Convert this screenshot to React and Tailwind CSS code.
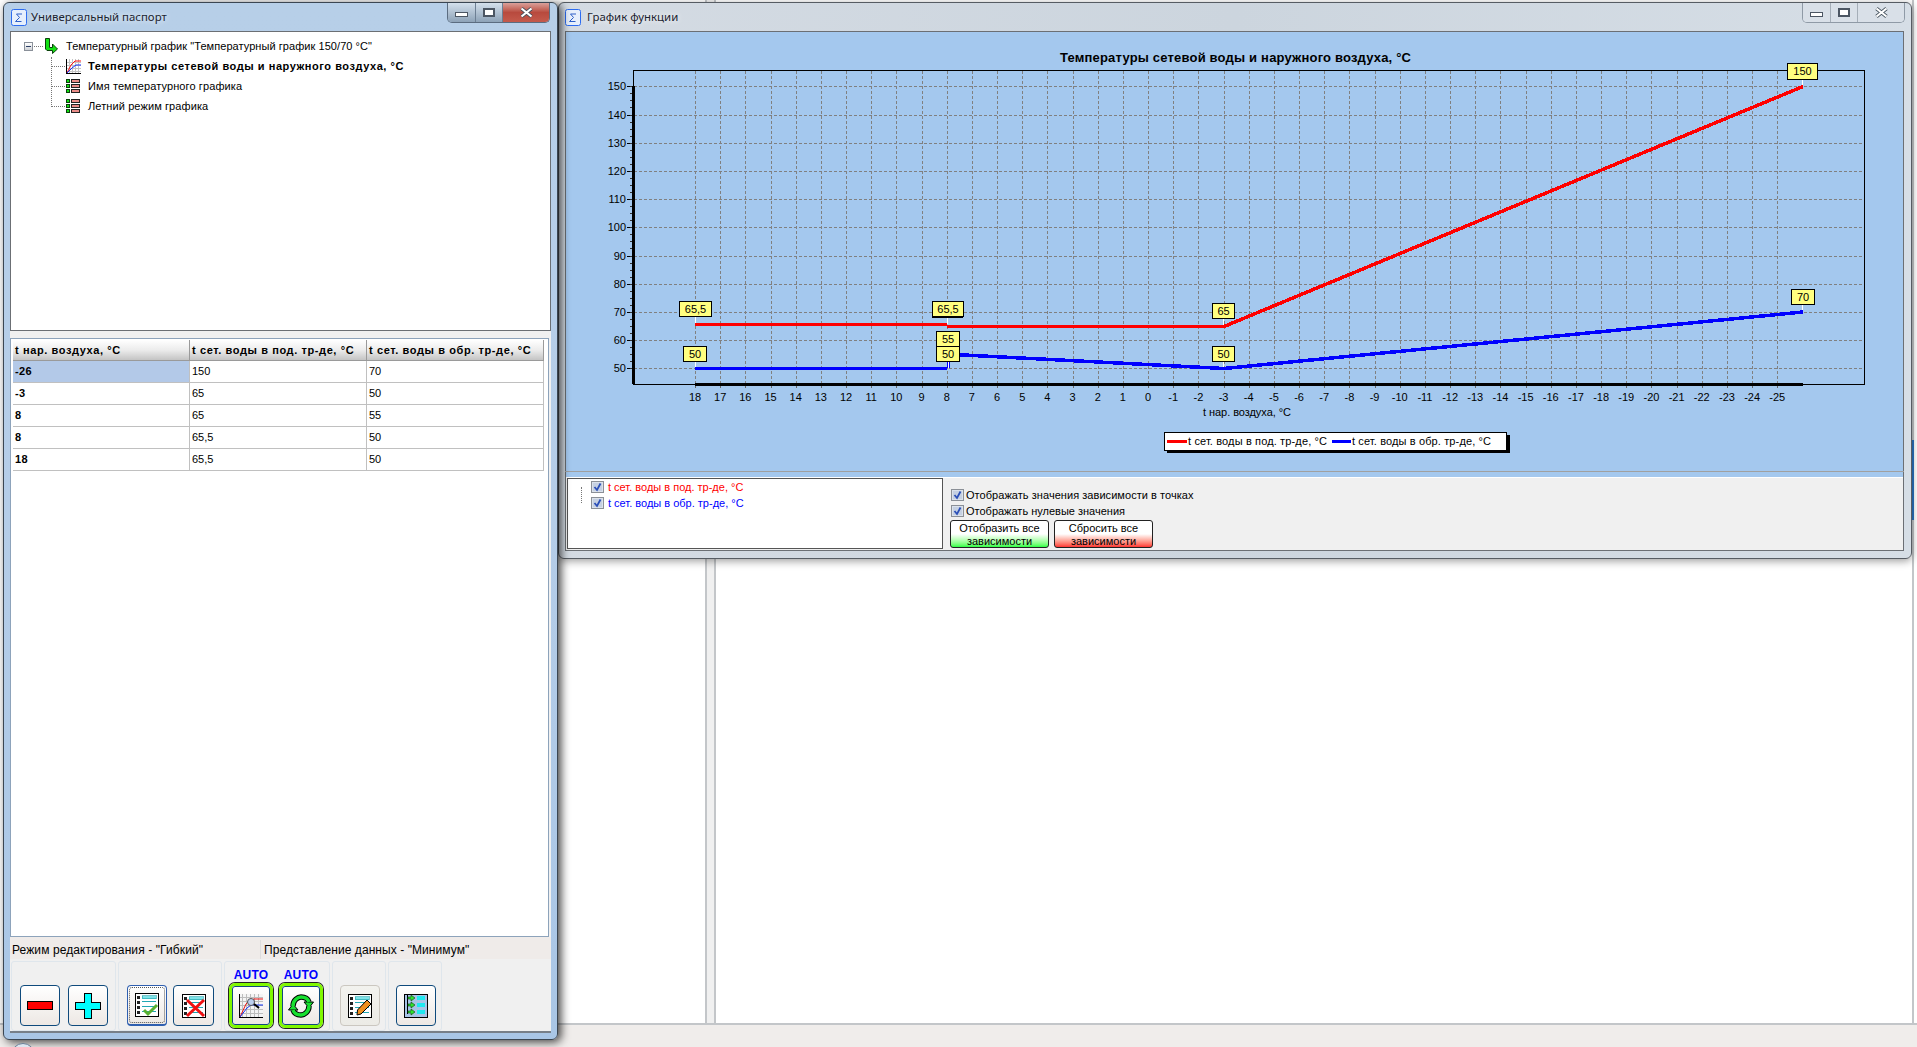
import React from "react";

const Sigma = () => (
  <svg width="16" height="17" viewBox="0 0 16 17" className="shrink-0">
    <rect x="0.5" y="0.5" width="15" height="16" rx="2" fill="#e6effc" stroke="#2d6cf0" />
    <path d="M11 5 H5.5 L8.5 8.5 L4.5 12.5 H10.5" fill="none" stroke="#2d5fc8" strokeWidth="1" />
  </svg>
);

const WinButtons = ({ active }) => (
  <div className={`ml-auto flex h-[20px] items-stretch rounded-b-[5px] border border-t-0 overflow-hidden ${active ? "border-[#5b6c80]" : "border-[#8f9aa6]"}`}>
    <div className={`w-[28px] flex items-center justify-center border-r ${active ? "border-[#6d7f93] bg-gradient-to-b from-[#d4e0ec] to-[#8ea3b8]" : "border-[#a5aeb8] bg-[#d9e0e8]"}`}>
      <div className="mt-[3px] h-[5px] w-[13px] border border-[#4c5663] bg-white" />
    </div>
    <div className={`w-[27px] flex items-center justify-center border-r ${active ? "border-[#6d7f93] bg-gradient-to-b from-[#d4e0ec] to-[#8ea3b8]" : "border-[#a5aeb8] bg-[#d9e0e8]"}`}>
      <div className="h-[9px] w-[12px] border-2 border-[#4c5663] bg-white" />
    </div>
    <div className={`w-[46px] flex items-center justify-center ${active ? "bg-gradient-to-b from-[#d9a09a] via-[#b84a3e] to-[#c45a4c]" : "bg-[#d9e0e8]"}`}>
      <svg width="13" height="11" viewBox="0 0 13 11">
        <path d="M1.5 1.5 L11.5 9.5 M11.5 1.5 L1.5 9.5" stroke="#44505c" strokeWidth="3.6" />
        <path d="M1.5 1.5 L11.5 9.5 M11.5 1.5 L1.5 9.5" stroke="#fff" strokeWidth="2.2" />
      </svg>
    </div>
  </div>
);

const TitleBar = ({ title, active, gap }) => (
  <div className="flex h-[28px] shrink-0 items-start">
    <div className="mt-[6px]"><Sigma /></div>
    <span className={`mt-[5px] ${gap} font-['Noto_Sans',sans-serif] text-[11.4px] leading-[18px] text-[#1c2430] [text-shadow:0_0_6px_#fff]`}>{title}</span>
    <WinButtons active={active} />
  </div>
);

const ArrowIcon = () => (
  <svg width="14" height="16" viewBox="0 0 14 16" className="shrink-0">
    <path d="M1.5 0.5 H5.5 V9.5 H8.5 V6 L13.5 11 L8.5 15.5 V12.5 H3 L1.5 11 Z" fill="#12e012" stroke="#0a400a" />
  </svg>
);

const GraphIcon = () => (
  <svg width="15" height="15" viewBox="0 0 15 15" className="shrink-0" shapeRendering="crispEdges">
    <rect width="15" height="15" fill="#fff" />
    <path d="M3 0V14M6 0V14M9 0V14M12 0V14M1 3H15M1 6H15M1 9H15M1 12H15" stroke="#c4c4c4" />
    <path d="M0.5 0V14.5H15" stroke="#000" fill="none" />
    <path d="M1 14 L5 6 L9 2 H15" stroke="#ff1010" fill="none" shapeRendering="auto" />
    <path d="M1 14 L6 9 L10 6 H15" stroke="#1030ff" fill="none" shapeRendering="auto" />
  </svg>
);

const ListIcon = () => (
  <svg width="14" height="15" viewBox="0 0 14 15" className="shrink-0" shapeRendering="crispEdges">
    {[0, 5, 10].map((y) => (
      <g key={y}>
        <rect x="0.5" y={y + 0.5} width="3" height="3" fill="#14e014" stroke="#0a400a" />
        <rect x="5.5" y={y + 0.5} width="8" height="3" fill="#e88c88" stroke="#222" />
      </g>
    ))}
  </svg>
);

const TreeRow = ({ icon, children, bold }) => (
  <div className="flex h-[20px] items-center">
    <div className="ml-[40px] mr-[1px] w-[14px] border-b border-dotted border-[#777]" />
    <div className="flex w-[22px] items-center">{icon}</div>
    <span className={`whitespace-nowrap text-[11px] text-black ${bold ? "font-bold tracking-[0.55px]" : "tracking-[0.1px]"}`}>{children}</span>
  </div>
);

const rows = [
  ["-26", "150", "70"],
  ["-3", "65", "50"],
  ["8", "65", "55"],
  ["8", "65,5", "50"],
  ["18", "65,5", "50"],
];

const heads = ["t нар. воздуха, °C", "t сет. воды в под. тр-де, °C", "t сет. воды в обр. тр-де, °C"];

const Doc = ({ children, bg = "#fff", bullets = true, lines = true }) => (
  <svg width="24" height="24" viewBox="0 0 24 24" shapeRendering="crispEdges">
    <rect x="0.5" y="0.5" width="23" height="23" fill={bg} stroke="#000" />
    {bullets && [4, 9, 14, 19].map((y) => <rect key={y} x="2" y={y - 1} width="3" height="3" fill="#222" />)}
    {lines && (
      <>
        <rect x="7" y="2.5" width="14" height="3" fill="#7fe3e8" stroke="#1aa0a8" strokeWidth="0.6" />
        <path d="M7 8.5H21M7 13.5H21M7 18.5H21" stroke="#22a8b4" />
      </>
    )}
    {children}
  </svg>
);

const ToolBtn = ({ children, focus, disabled, w = "w-[40px]" }) => (
  <div className={`relative flex ${w} h-[41px] items-center justify-center rounded-[4px] border bg-gradient-to-b ${disabled ? "border-[#cbc7c0] from-[#f2f2ee] to-[#ecebe6]" : focus ? "border-[#2f5fb0] border-b-2 from-white to-[#ede8e4]" : "border-[#0f4a7c] from-white to-[#ede8e4]"}`}>
    {focus && <div className="absolute inset-[1px] rounded-[3px] border border-dotted border-[#555]" />}
    {children}
  </div>
);

const Band = ({ w, children, px }) => (
  <div className={`flex h-[70px] ${w} ${px} items-end rounded-[3px] border border-[#dfe6ec] bg-[#f0f0f0] pb-[4px]`}>{children}</div>
);

const AutoBtn = ({ children }) => (
  <div className="flex w-[46px] flex-col items-center">
    <span className="mb-[2px] text-[12px] font-bold leading-[12px] tracking-[0.2px] text-[#0000ff]">AUTO</span>
    <div className="-mb-[2px] rounded-[6px] border-[3px] border-[#80f800] shadow-[0_0_0_1px_#222]">
      <div className="flex h-[39px] w-[38px] items-center justify-center rounded-[3px] border border-[#0f4a7c] bg-gradient-to-b from-white to-[#ede8e4]">
        {children}
      </div>
    </div>
  </div>
);

const Check = () => (
  <svg width="13" height="12" viewBox="0 0 13 12" className="shrink-0">
    <rect x="0.5" y="0.5" width="12" height="11" fill="#dbe2ec" stroke="#8b9097" />
    <rect x="2" y="2" width="9" height="8" fill="#c5d0e2" />
    <path d="M3.5 6 L6 9 L9.5 2.5" fill="none" stroke="#2b4fb8" strokeWidth="1.8" />
  </svg>
);

// chart geometry
const X = (i) => 695 + 25.17 * i;
const Y = (v) => 369.3 - (v - 50) * 2.82;
const xLabels = Array.from({ length: 44 }, (_, i) => 18 - i);
const yLabels = [150, 140, 130, 120, 110, 100, 90, 80, 70, 60, 50];

const Tag = ({ x1, x2, y1, y2, t }) => (
  <g>
    <rect x={x1 + 0.5} y={y1 + 0.5} width={x2 - x1} height={y2 - y1} fill="#ffff80" stroke="#000" shapeRendering="crispEdges" />
    <text x={(x1 + x2) / 2 + 0.5} y={y1 + 12} textAnchor="middle" fontSize="11" fill="#000">{t}</text>
  </g>
);

const Chart = () => (
  <svg viewBox="565 33 1339 439" className="block h-[439px] w-[1339px] font-['Liberation_Sans',sans-serif]">
    <text x="1235.5" y="63" textAnchor="middle" fontSize="13" fontWeight="700" textLength="351" fill="#000">Температуры сетевой воды и наружного воздуха, °C</text>
    <g shapeRendering="crispEdges">
      <rect x="633.5" y="71.5" width="1231" height="314" fill="none" stroke="#000" />
      {yLabels.map((v) => (
        <path key={v} d={`M634 ${Math.round(Y(v)) + 0.5} H1864`} stroke="#808080" strokeDasharray="3 2" />
      ))}
      {xLabels.map((v, i) => (
        <path key={v} d={`M${Math.round(X(i)) + 0.5} 72 V385`} stroke="#808080" strokeDasharray="3 2" />
      ))}
      {yLabels.map((v) => (
        <path key={v} d={`M627 ${Math.round(Y(v)) + 0.5} H633`} stroke="#000" />
      ))}
      {Array.from({ length: 41 }, (_, i) => (
        <path key={i} d={`M630 ${Math.round(Y(50 + i * 2.5)) + 0.5} H633`} stroke="#333" />
      ))}
      <rect x="632" y={Y(150)} width="3" height={385 - Y(150)} fill="#000" />
      <rect x="695" y="384" width="1108" height="3" fill="#000" />
      {xLabels.map((v, i) => (
        <path key={v} d={`M${Math.round(X(i)) + 0.5} 387 V389`} stroke="#666" />
      ))}
      {/* white leaders */}
      <path d="M695.5 317V325M947.5 317V325M1223.5 319V327M1223.5 362V369M695.5 362V369M1802.5 80V87M1802.5 305V313" stroke="#fff" />
      {/* red series */}
      <path d="M695 325.5 H947" stroke="#ff0000" strokeWidth="3" />
      <path d="M947 327.5 H1224" stroke="#ff0000" strokeWidth="3" />
      <path d="M695 369.5 H947" stroke="#0000ff" strokeWidth="3" />
      <path d="M948 356 V369" stroke="#0000ff" strokeWidth="3" />
      <path d="M948.5 356V369" stroke="#fff" />
    </g>
    <path d="M1224 327.5 L1803 87.5" stroke="#ff0000" strokeWidth="3.5" fill="none" shapeRendering="crispEdges" />
    <path d="M948 355.2 L1224 369.5 L1803 313" stroke="#0000ff" strokeWidth="3.5" fill="none" shapeRendering="crispEdges" />
    <g fontSize="11" fill="#000">
      {yLabels.map((v) => (
        <text key={v} x="626" y={Y(v) + 4} textAnchor="end">{v}</text>
      ))}
      {xLabels.map((v, i) => (
        <text key={v} x={X(i)} y="402" textAnchor="middle">{v}</text>
      ))}
      <text x="1203" y="417" textLength="88">t нар. воздуха, °C</text>
    </g>
    <rect x="932" y="303" width="31" height="16" fill="#000" shapeRendering="crispEdges" />
    <Tag x1={679} x2={711} y1={302} y2={317} t="65,5" />
    <Tag x1={932} x2={963} y1={302} y2={317} t="65,5" />
    <Tag x1={1212} x2={1234} y1={304} y2={319} t="65" />
    <Tag x1={936} x2={959} y1={332} y2={347} t="55" />
    <Tag x1={683} x2={706} y1={347} y2={362} t="50" />
    <Tag x1={936} x2={959} y1={347} y2={362} t="50" />
    <Tag x1={1212} x2={1234} y1={347} y2={362} t="50" />
    <Tag x1={1787} x2={1817} y1={64} y2={80} t="150" />
    <Tag x1={1791} x2={1814} y1={290} y2={305} t="70" />
    {/* legend */}
    <g shapeRendering="crispEdges">
      <rect x="1167" y="436" width="343" height="18" fill="#000" />
      <rect x="1164.5" y="433.5" width="342" height="17.5" fill="#fff" stroke="#000" />
      <path d="M1167 442 H1187" stroke="#ff0000" strokeWidth="3" />
      <path d="M1332 442 H1351" stroke="#0000ff" strokeWidth="3" />
    </g>
    <g fontSize="11" fill="#000">
      <text x="1188" y="446" textLength="139">t сет. воды в под. тр-де, °C</text>
      <text x="1352" y="446" textLength="139">t сет. воды в обр. тр-де, °C</text>
    </g>
  </svg>
);

const BigBtn = ({ top, bottom, tone }) => (
  <div className={`flex h-[28px] w-[99px] flex-col items-center rounded-[3px] border border-[#222] bg-gradient-to-b ${tone} pt-[1px] text-[11px] leading-[13px] text-black`}>
    <span>{top}</span>
    <span>{bottom}</span>
  </div>
);

export default function App() {
  return (
    <div className="relative flex h-[1047px] w-[1917px] flex-col overflow-hidden bg-white font-['Liberation_Sans',sans-serif]">
      {/* desktop application behind the windows */}
      <div className="flex h-[1025px] shrink-0 border-b-2 border-[#c3c6c9]">
        <div className="w-[707px] border-r-2 border-[#c3c6c9] bg-white" />
        <div className="w-[7px] bg-[#f0f0f0]" />
        <div className="w-[1200px] border-l-2 border-r-2 border-[#c3c6c9] bg-white" />
      </div>
      <div className="flex-1 bg-[#f0edeb]" />

      {/* universal passport window */}
      <div className="absolute left-[3px] top-[2px] z-20 flex h-[1038px] w-[555px] flex-col rounded-t-[6px] rounded-b-[6px] border border-[#3b4652] bg-gradient-to-b from-[#b7cfe8] via-[#b5cde8] to-[#a9c6e6] px-[6px] pb-[5px] shadow-[3px_2px_10px_rgba(0,0,0,0.75)]">
        <div className="-ml-[6px] -mr-[6px] px-[7px]">
          <TitleBar title="Универсальный паспорт" active gap="ml-[4px]" />
        </div>
        <div className="relative h-[300px] shrink-0 border border-[#6b6f74] bg-white pt-[4px]">
          <div className="flex h-[20px] items-center pl-[13px]">
            <div className="flex h-[9px] w-[9px] items-center justify-center border border-[#8a9099] bg-gradient-to-b from-white to-[#cfd2d6]">
              <div className="h-[1px] w-[5px] bg-[#2c3e66]" />
            </div>
            <div className="mx-[1px] w-[9px] border-b border-dotted border-[#777]" />
            <ArrowIcon />
            <span className="ml-[8px] whitespace-nowrap text-[11px] tracking-[0.06px] text-black">Температурный график "Температурный график 150/70 °C"</span>
          </div>
          <div className="absolute left-[40px] top-[25px] h-[50px] border-l border-dotted border-[#777]" />
          <TreeRow icon={<GraphIcon />} bold>Температуры сетевой воды и наружного воздуха, °C</TreeRow>
          <TreeRow icon={<ListIcon />}>Имя температурного графика</TreeRow>
          <TreeRow icon={<ListIcon />}>Летний режим графика</TreeRow>
        </div>
        <div className="h-[7px] shrink-0 bg-[#f0f0f0]" />
        <div className="h-[599px] shrink-0 bg-[#f0f0f0] pr-[2px]">
          <div className="h-[599px] border border-[#8da3bb] bg-white pl-[2px] pt-[1px]">
            <div className="grid w-[531px] grid-cols-[177px_177px_177px]">
              {heads.map((h) => (
                <div key={h} className="flex h-[21px] items-center border-r border-b border-[#9a9a9a] bg-gradient-to-b from-white via-[#ececec] to-[#c4c4c4] pl-[2px] text-[11px] font-bold tracking-[0.6px] text-black">{h}</div>
              ))}
              {rows.map((r, i) =>
                r.map((c, j) => (
                  <div key={j} className={`flex h-[22px] items-center border-r border-b border-[#c0c0c0] pl-[2px] text-[11px] text-black ${j === 0 ? "font-bold tracking-[0.4px]" : ""} ${i === 0 && j === 0 ? "bg-[#b3c9e8]" : "bg-white"}`}>{c}</div>
                ))
              )}
            </div>
          </div>
        </div>
        <div className="flex h-[22px] shrink-0 items-center bg-[#efebe9] pt-[3px] text-[12px] text-black">
          <div className="w-[250px] pl-[2px] tracking-[0.1px]">Режим редактирования - "Гибкий"</div>
          <div className="h-[19px] border-l border-[#ddd]" />
          <div className="pl-[3px] tracking-[0.07px]">Представление данных - "Минимум"</div>
        </div>
        <div className="flex h-[74px] shrink-0 gap-[2px] border-b-2 border-[#777f88] bg-[#f0f0f0] pl-[1px] pt-[2px]">
          <Band w="w-[105px]" px="pl-[8px] gap-[8px]">
            <ToolBtn>
              <svg width="26" height="9" viewBox="0 0 26 9" shapeRendering="crispEdges"><rect x="0.5" y="0.5" width="25" height="8" fill="#ff0000" stroke="#000" /></svg>
            </ToolBtn>
            <ToolBtn>
              <svg width="26" height="26" viewBox="0 0 26 26" shapeRendering="crispEdges"><path d="M9.5 0.5H16.5V9.5H25.5V16.5H16.5V25.5H9.5V16.5H0.5V9.5H9.5Z" fill="#00ffff" stroke="#000" /></svg>
            </ToolBtn>
          </Band>
          <Band w="w-[104px]" px="pl-[8px] gap-[6px]">
            <ToolBtn focus>
              <Doc><path d="M9 17 L13 21 L22 12" fill="none" stroke="#58b030" strokeWidth="3" shapeRendering="auto" /></Doc>
            </ToolBtn>
            <ToolBtn w="w-[41px]">
              <Doc><path d="M5 6 L22 22 M22 6 L5 22" fill="none" stroke="#f01010" strokeWidth="3" shapeRendering="auto" /></Doc>
            </ToolBtn>
          </Band>
          <Band w="w-[106px]" px="pl-[3px] gap-[4px]">
            <AutoBtn>
              <svg width="24" height="24" viewBox="0 0 24 24">
                <g shapeRendering="crispEdges">
                  <rect width="24" height="24" fill="#f4f4f4" />
                  <path d="M3.5 0V23M7.5 0V23M11.5 0V23M15.5 0V23M19.5 0V23M1 3.5H24M1 7.5H24M1 11.5H24M1 15.5H24M1 19.5H24" stroke="#bdbdbd" />
                  <path d="M0.5 0V23.5H24" stroke="#000" fill="none" />
                </g>
                <path d="M1 23 L7 10 Q10 5 15 5 H24" fill="none" stroke="#f01010" />
                <path d="M1 23 L8 14 L12 11 H24" fill="none" stroke="#1030f0" />
                <circle cx="12" cy="8" r="3.5" fill="#bcd0f0" stroke="#555" />
                <path d="M15 10 L20 14" stroke="#000" strokeWidth="2" />
              </svg>
            </AutoBtn>
            <AutoBtn>
              <svg width="26" height="24" viewBox="0 0 26 24">
                <path d="M5 12 C5 6 10 3 13 3 C17 3 20 5 21 8" fill="none" stroke="#000" strokeWidth="5.5" />
                <path d="M21 12 C21 18 16 21 13 21 C9 21 6 19 5 16" fill="none" stroke="#000" strokeWidth="5.5" />
                <path d="M16 8 H25.5 L21 14 Z M10 16 H0.5 L5 10 Z" fill="#18e030" stroke="#000" />
                <path d="M5 12 C5 6 10 3 13 3 C17 3 20 5 21 8" fill="none" stroke="#18e030" strokeWidth="3.5" />
                <path d="M21 12 C21 18 16 21 13 21 C9 21 6 19 5 16" fill="none" stroke="#18e030" strokeWidth="3.5" />
              </svg>
            </AutoBtn>
          </Band>
          <Band w="w-[54px]" px="pl-[7px]">
            <ToolBtn disabled>
              <Doc>
                <path d="M9 21 L9.5 16 L19 6 L23 10 L13 20 Z" fill="#f09020" stroke="#000" shapeRendering="auto" />
              </Doc>
            </ToolBtn>
          </Band>
          <Band w="w-[54px]" px="pl-[7px]">
            <ToolBtn>
              <svg width="24" height="24" viewBox="0 0 24 24" shapeRendering="crispEdges">
                <rect x="0.5" y="0.5" width="23" height="23" fill="#a8c4e6" stroke="#000" />
                <path d="M3.5 1V20" stroke="#000" />
                {[4, 11, 18].map((y) => (
                  <g key={y}>
                    <path d={`M4 ${y - 1} H7 V${y - 3} L11 ${y} L7 ${y + 3} V${y + 1} H4 Z`} fill="#30e030" stroke="#084008" strokeWidth="0.6" shapeRendering="auto" />
                    <rect x="12.5" y={y - 2.5} width="8" height="4" fill="#20e8f0" />
                  </g>
                ))}
              </svg>
            </ToolBtn>
          </Band>
        </div>
      </div>

      {/* function chart window */}
      <div className="absolute left-[558px] top-[2px] z-10 flex h-[557px] w-[1354px] flex-col rounded-[6px] border border-[#565c63] bg-gradient-to-r from-[#d4dbe3] via-[#ccd5de] to-[#d6dee6] px-[6px] shadow-[0_2px_8px_rgba(0,0,0,0.4)]">
        <div className="-mr-[6px] pr-[6px]">
          <TitleBar title="График функции" gap="ml-[6px]" />
        </div>
        <div className="h-[520px] w-[1339px] shrink-0 border border-b-2 border-[#6b6f74] bg-[#a4c8ee]">
          <div className="-ml-px h-[440px] w-[1339px] border-b border-[#a0a0a0]">
            <Chart />
          </div>
          <div className="h-[5px]" />
          <div className="flex h-[73px] border-t border-white bg-[#f0f0f0]">
            <div className="relative ml-[1px] h-[71px] w-[376px] shrink-0 border border-[#555] bg-white text-[11px]">
              <div className="absolute left-[13px] top-[8px] h-[16px] w-[10px] border-l border-dotted border-[#777]" />
              <div className="flex h-[16px] items-center pl-[23px]"><div className="mr-[4px]"><Check /></div><span className="text-[#ff0000]">t сет. воды в под. тр-де, °C</span></div>
              <div className="flex h-[16px] items-center pl-[23px]"><div className="mr-[4px]"><Check /></div><span className="text-[#0000ff]">t сет. воды в обр. тр-де, °C</span></div>
            </div>
            <div className="ml-[7px] flex flex-col pt-[9px] text-[11px]">
              <div className="flex h-[16px] items-center gap-[2px] pl-[1px] tracking-[0.05px]"><Check /><span>Отображать значения зависимости в точках</span></div>
              <div className="flex h-[16px] items-center gap-[2px] pl-[1px]"><Check /><span>Отображать нулевые значения</span></div>
              <div className="flex gap-[5px] pt-[1px]">
                <BigBtn top="Отобразить все" bottom="зависимости" tone="from-white from-50% to-[#20ff40]" />
                <BigBtn top="Сбросить все" bottom="зависимости" tone="from-white from-50% to-[#ff3030]" />
              </div>
            </div>
          </div>
        </div>
      </div>

      {/* slivers of other windows */}
      <div className="absolute left-[1912px] top-[440px] h-[80px] w-[2px] bg-[#2b72c0]" />
      <div className="absolute left-[11px] top-[1043px] z-30 h-[24px] w-[24px] rounded-full border border-[#6a7f96] bg-[#dce6f0]" />
    </div>
  );
}
